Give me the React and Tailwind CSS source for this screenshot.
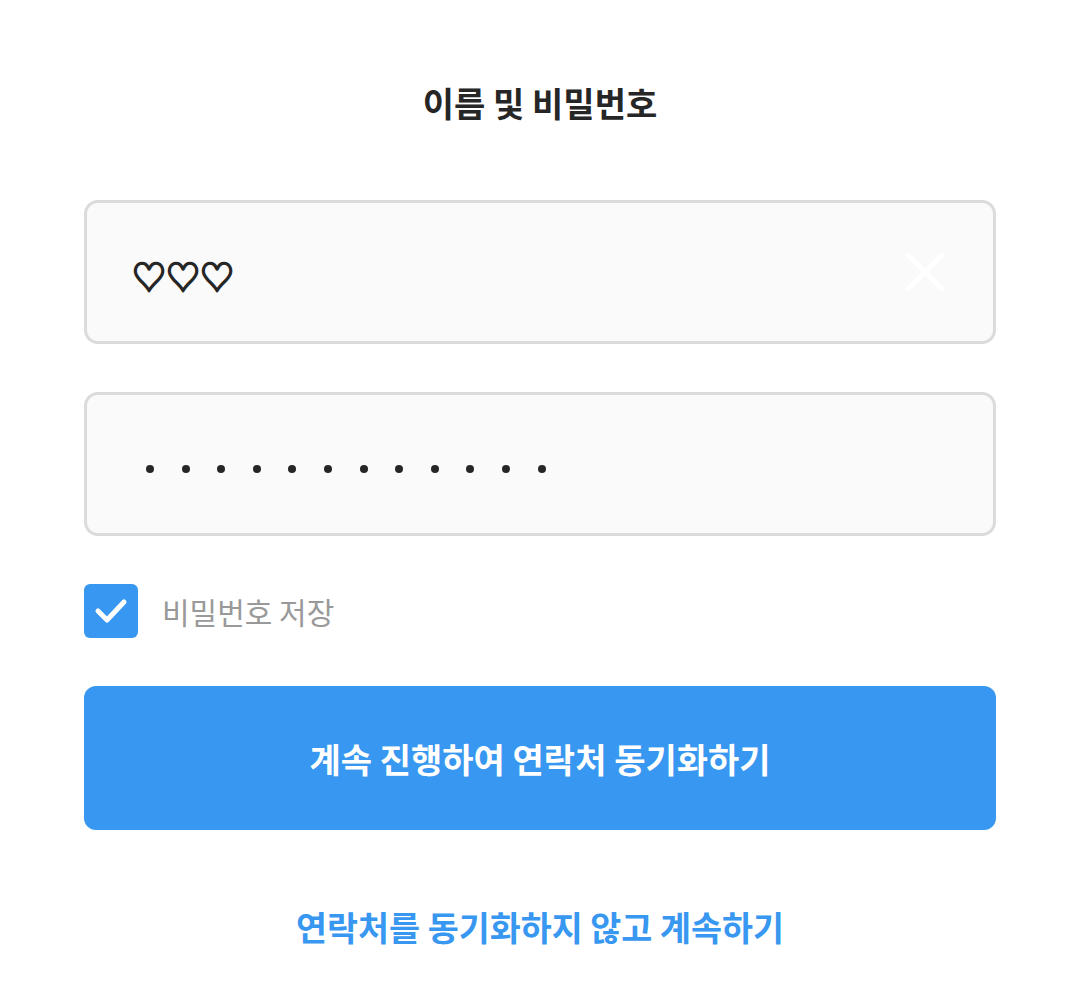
import React from "react";

const font = { fontFamily: '"Noto Sans CJK KR", "Noto Sans", sans-serif' };

export default function App() {
  return (
    <div className="w-[1080px] h-[1004px] bg-white flex flex-col items-center" style={font}>
      <div className="w-[912px] flex flex-col">
        <div className="h-[200px] flex items-start justify-center pt-[78px]">
          <h1 className="text-[34px] leading-[50px] font-bold text-[#262626]">이름 및 비밀번호</h1>
        </div>
        <div className="h-[144px] rounded-[14px] border-[3px] border-[#dbdbdb] bg-[#fafafa] flex items-center pl-[45px] pr-[46px] justify-between">
          <span className="text-[34px] leading-none text-[#262626] font-bold pt-[8px] [-webkit-text-stroke:1.6px_#262626]" style={font}>♡♡♡</span>
          <svg width="44" height="44" viewBox="0 0 44 44" fill="none">
            <path d="M5 5L39 39M39 5L5 39" stroke="#ffffff" strokeWidth="5" strokeLinecap="round" />
          </svg>
        </div>
        <div className="h-[144px] mt-[48px] rounded-[14px] border-[3px] border-[#dbdbdb] bg-[#fafafa] flex items-center pl-[59px] pt-[10px]">
          <div className="flex gap-[27.6px]">
            {Array.from({ length: 12 }).map((_, i) => (
              <div key={i} className="w-[8px] h-[8px] rounded-full bg-[#262626]" />
            ))}
          </div>
        </div>
        <div className="mt-[48px] flex items-center gap-[24px]">
          <div className="w-[54px] h-[54px] rounded-[6px] bg-[#3897f0] flex items-center justify-center">
            <svg width="38" height="38" viewBox="0 0 38 38" fill="none">
              <path d="M6 19L15 28L32 10" stroke="#ffffff" strokeWidth="5" strokeLinecap="round" strokeLinejoin="round" />
            </svg>
          </div>
          <span className="text-[30px] text-[#999999] leading-none">비밀번호 저장</span>
        </div>
        <button className="mt-[48px] h-[144px] rounded-[12px] bg-[#3897f0] text-white text-[34px] font-bold flex items-center justify-center">
          계속 진행하여 연락처 동기화하기
        </button>
        <div className="mt-[72px] flex justify-center">
          <span className="text-[33.7px] font-bold text-[#3897f0]">연락처를 동기화하지 않고 계속하기</span>
        </div>
      </div>
    </div>
  );
}
